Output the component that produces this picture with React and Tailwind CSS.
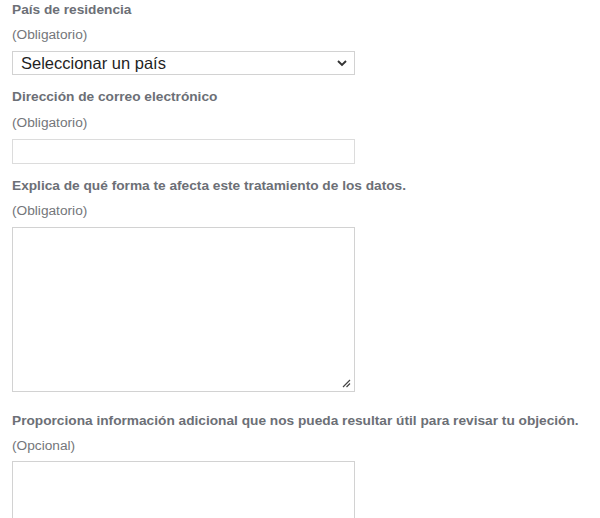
export default function App() {
    return (
        <div className="min-h-[518px] bg-white px-[12px] pt-0 font-['Liberation_Sans',Arial,sans-serif] text-[13.7px]">
            <div className="leading-[20px] font-bold text-[#6c6f76]">País de residencia</div>
            <div className="mt-[5px] leading-[20px] text-[#74767a]">(Obligatorio)</div>
            <div className="mt-[6px] flex h-[24px] w-[343px] items-center justify-between border border-[#d2d2d2] pl-[8px] pr-[5px] text-[16.5px] text-[#1f1f1f]">
                <span>Seleccionar un país</span>
                <svg width="14" height="14" viewBox="0 0 14 14" fill="none">
                    <path d="M3 5 L7 9 L11 5" stroke="#333" strokeWidth="1.9" />
                </svg>
            </div>

            <div className="mt-[12px] leading-[20px] font-bold text-[#6c6f76]">Dirección de correo electrónico</div>
            <div className="mt-[6px] leading-[20px] text-[#74767a]">(Obligatorio)</div>
            <div className="mt-[6px] h-[25px] w-[343px] border border-[#dcdcdc]" />

            <div className="mt-[12px] leading-[20px] font-bold text-[#6c6f76]">
                Explica de qué forma te afecta este tratamiento de los datos.
            </div>
            <div className="mt-[5px] leading-[20px] text-[#74767a]">(Obligatorio)</div>
            <div className="relative mt-[6px] h-[165px] w-[343px] border border-[#d2d2d2]">
                <svg className="absolute right-[3px] bottom-[3px]" width="9" height="9" viewBox="0 0 9 9" fill="none">
                    <path d="M8 1 L1 8 M8 4.5 L4.5 8" stroke="#444" strokeWidth="1.2" />
                </svg>
            </div>

            <div className="mt-[19px] leading-[20px] font-bold text-[#6c6f76]">
                Proporciona información adicional que nos pueda resultar útil para revisar tu objeción.
            </div>
            <div className="mt-[5px] leading-[20px] text-[#74767a]">(Opcional)</div>
            <div className="mt-[5px] h-[80px] w-[343px] border border-[#d2d2d2]" />
        </div>
    );
}
